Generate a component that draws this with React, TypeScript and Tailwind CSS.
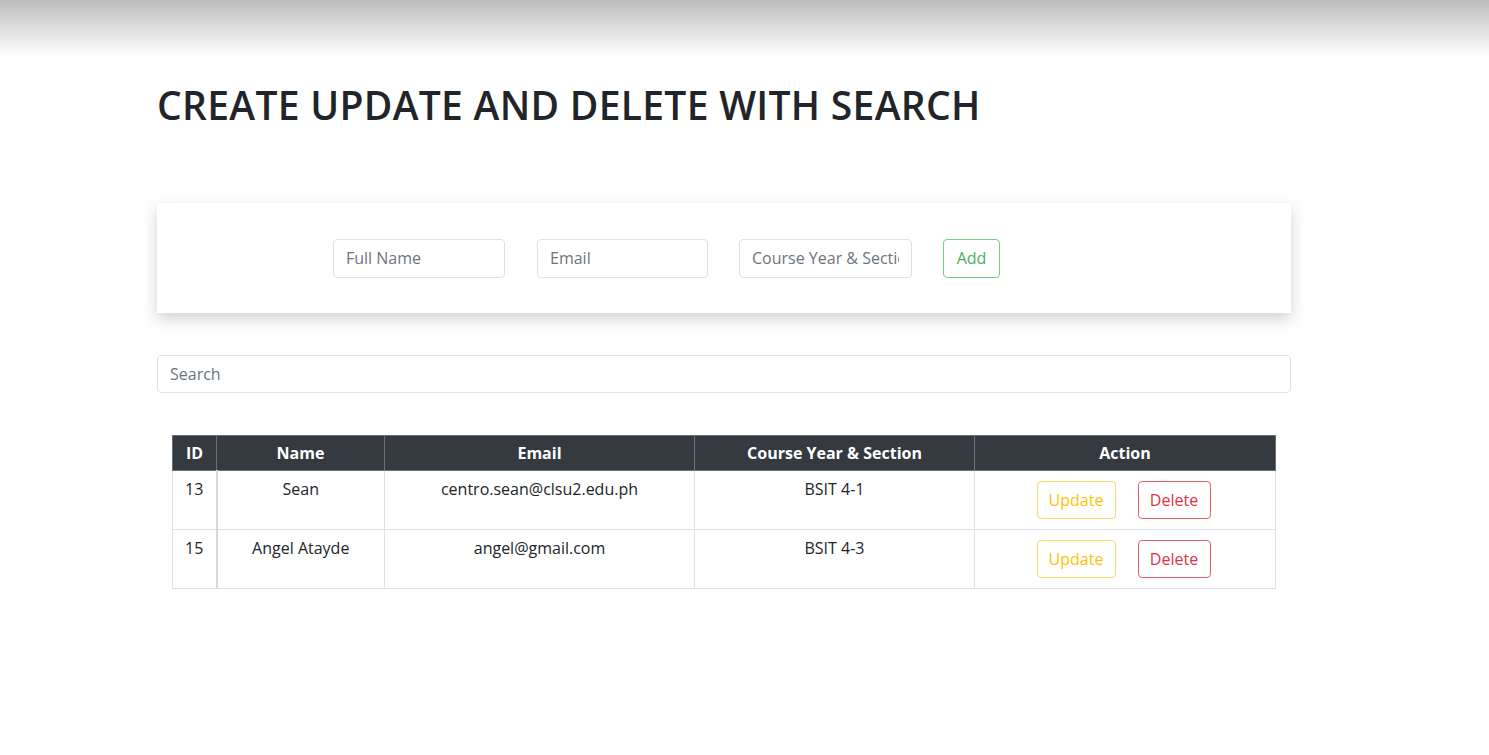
import React from "react";

const rows = [
  { id: 13, name: "Sean", email: "centro.sean@clsu2.edu.ph", course: "BSIT 4-1" },
  { id: 15, name: "Angel Atayde", email: "angel@gmail.com", course: "BSIT 4-3" },
];

export default function App() {
  return (
    <div
      className="min-h-screen bg-white text-[#212529] text-[16px]"
      style={{ fontFamily: '"Open Sans", "Noto Sans", sans-serif' }}
    >
      {/* top fade */}
      <div className="h-[56px] bg-gradient-to-b from-[#bdbdbd] to-white" />

      <div className="ml-[157px] w-[1134px]">
        <h1 className="mt-[26px] text-[39px] leading-[46px] font-semibold tracking-[0.3px] text-[#212529]">
          CREATE UPDATE AND DELETE WITH SEARCH
        </h1>

        {/* Add form card */}
        <div className="mt-[75px] h-[110px] bg-white shadow-[0_6px_14px_rgba(0,0,0,0.18)] flex items-center pl-[176px]">
          <input
            className="w-[172px] h-[39px] px-3 border border-[#dee2e6] rounded-[4px] text-[16px] placeholder:text-[#6c757d] outline-none"
            placeholder="Full Name"
          />
          <input
            className="ml-[32px] w-[171px] h-[39px] px-3 border border-[#dee2e6] rounded-[4px] text-[16px] placeholder:text-[#6c757d] outline-none"
            placeholder="Email"
          />
          <input
            className="ml-[31px] w-[173px] h-[39px] px-3 border border-[#dee2e6] rounded-[4px] text-[16px] placeholder:text-[#6c757d] outline-none"
            placeholder="Course Year & Section"
          />
          <button className="ml-[31px] w-[57px] h-[39px] border border-[#75d087] rounded-[4px] text-[#4cae5f] text-[16px]">
            Add
          </button>
        </div>

        {/* search */}
        <input
          className="mt-[42px] block w-[1134px] h-[38px] px-3 border border-[#dee2e6] rounded-[4px] text-[16px] placeholder:text-[#6c757d] outline-none"
          placeholder="Search"
        />

        {/* table */}
        <table className="mt-[42px] ml-[15px] w-[1104px] border-collapse text-center border border-[#dee2e6]">
          <thead>
            <tr className="bg-[#343a40] text-white font-bold h-[35px]">
              <th className="w-[44px] border border-[#6b7178] px-2 py-[5px]">ID</th>
              <th className="w-[168px] border border-[#6b7178] px-2 py-[5px]">Name</th>
              <th className="w-[310px] border border-[#6b7178] px-2 py-[5px]">Email</th>
              <th className="w-[280px] border border-[#6b7178] px-2 py-[5px]">Course Year &amp; Section</th>
              <th className="border border-[#6b7178] px-2 py-[5px]">Action</th>
            </tr>
          </thead>
          <tbody>
            {rows.map((r) => (
              <tr key={r.id}>
                <td className="border border-[#dee2e6] border-r-2 border-r-[#d6d9dc] pt-[6px] pb-[10px] align-top">{r.id}</td>
                <td className="border border-[#dee2e6] pt-[6px] pb-[10px] align-top">{r.name}</td>
                <td className="border border-[#dee2e6] pt-[6px] pb-[10px] align-top">{r.email}</td>
                <td className="border border-[#dee2e6] pt-[6px] pb-[10px] align-top">{r.course}</td>
                <td className="border border-[#dee2e6] pt-[6px] pb-[10px] align-top">
                  <div className="mt-1 flex justify-center gap-[22px] pr-[3px]">
                    <button className="w-[79px] h-[38px] border border-[#ffd966] rounded-[4px] text-[#ffc107]">
                      Update
                    </button>
                    <button className="w-[73px] h-[38px] border border-[#e4606d] rounded-[4px] text-[#dc3545]">
                      Delete
                    </button>
                  </div>
                </td>
              </tr>
            ))}
          </tbody>
        </table>
      </div>
    </div>
  );
}
